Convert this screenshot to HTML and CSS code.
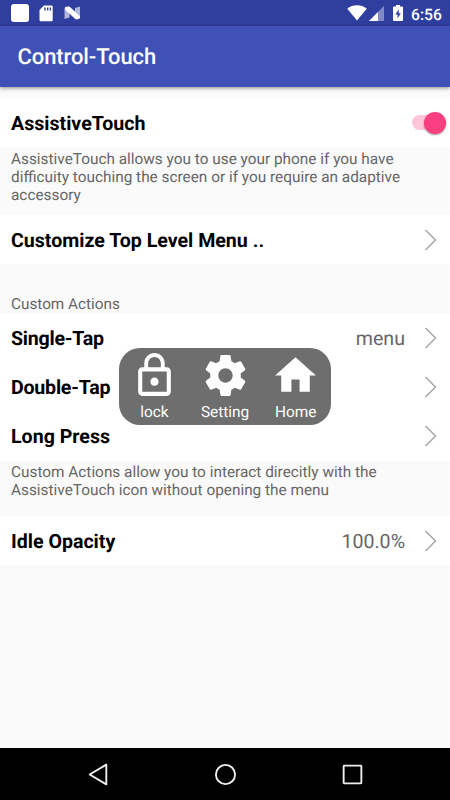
FILE: index.html
```
<!DOCTYPE html>
<html>
  <head>
    <meta charset="utf-8">
    <title>Control-Touch</title>
    <link rel="stylesheet" href="styles.css">
  </head>
  <body>
    <div class="statusbar">
      <div class="status-left">
        <span class="app-square"></span>
        <svg class="sd" viewBox="0 0 14 17"><path fill="#fff" fill-rule="evenodd" d="M5 .5h7.500a1.200 1.200 0 0 1 1.200 1.200v13.300a1.200 1.200 0 0 1-1.200 1.200H1.700A1.200 1.200 0 0 1 .500 15V5zM5.200 2.500v3h1.400v-3zM8 2.500v3h1.400v-3zM10.700 2.500v3h1.300v-3z"/></svg>
        <svg class="nougat" viewBox="0 0 17 14"><path fill="#b2b8dd" d="M.500 2v11l5-1.500V6zM11 2l5-1.500V11l-5-3.500z"/><path fill="#fff" d="M1 2.200Q.500 1 2 .800L4.600.500Q5.500.500 6 1L16 10.300v1.500q0 .700-.800.900l-2.700.700q-.800 0-1.500-.600L1 3.500z"/></svg>
      </div>
      <div class="status-right">
        <svg class="wifi" viewBox="0 0 20 16"><path fill="#fff" d="M10 15.500L.300 3.700C5.500-.800 14.500-.800 19.700 3.700z"/></svg>
        <svg class="signal" viewBox="0 0 15 15"><path fill="#8289c5" d="M15 0v15H0z"/><path fill="#fff" d="M9 6v9H0z"/></svg>
        <svg class="battery" viewBox="0 0 10 16"><path fill="#fff" fill-rule="evenodd" d="M3 0h4v1.600h2q1 0 1 1V15q0 1-1 1H1q-1 0-1-1V2.600q0-1 1-1h2zM5.700 4.200L2.400 9.600h2.200v4l3.200-5.400H5.700z"/></svg>
        <span class="clock">6:56</span>
      </div>
    </div>

    <div class="toolbar">Control-Touch</div>

    <div class="content">
      <div class="row">
        <span class="title">AssistiveTouch</span>
        <span class="switch"><span class="thumb"></span></span>
      </div>
      <p class="note note-top">AssistiveTouch allows you to use your phone if you have<br>difficuity touching the screen or if you require an adaptive<br>accessory</p>

      <div class="row">
        <span class="title">Customize Top Level Menu ..</span>
        <svg class="arrow" viewBox="0 0 13 22"><path d="M1.500 1l10 10-10 10"/></svg>
      </div>

      <div class="section">Custom Actions</div>
      <div class="row">
        <span class="title tight">Single-Tap</span>
        <span class="value">menu</span>
        <svg class="arrow" viewBox="0 0 13 22"><path d="M1.500 1l10 10-10 10"/></svg>
      </div>
      <div class="row">
        <span class="title tight">Double-Tap</span>
        <svg class="arrow" viewBox="0 0 13 22"><path d="M1.500 1l10 10-10 10"/></svg>
      </div>
      <div class="row">
        <span class="title">Long Press</span>
        <svg class="arrow" viewBox="0 0 13 22"><path d="M1.500 1l10 10-10 10"/></svg>
      </div>
      <p class="note note-actions">Custom Actions allow you to interact direcitly with the<br>AssistiveTouch icon without opening the menu</p>

      <div class="row">
        <span class="title">Idle Opacity</span>
        <span class="value">100.0%</span>
        <svg class="arrow" viewBox="0 0 13 22"><path d="M1.500 1l10 10-10 10"/></svg>
      </div>
    </div>

    <!-- floating touch menu -->
    <div class="popup">
      <div class="item">
        <svg viewBox="0 0 24 24"><path d="M12 17c1.100 0 2-.900 2-2s-.900-2-2-2-2 .900-2 2 .900 2 2 2zm6-9h-1V6c0-2.760-2.240-5-5-5S7 3.240 7 6v2H6c-1.100 0-2 .900-2 2v10c0 1.100.900 2 2 2h12c1.100 0 2-.900 2-2V10c0-1.100-.900-2-2-2zM8.900 6c0-1.710 1.390-3.100 3.100-3.100s3.100 1.390 3.100 3.100v2H8.900V6zM18 20H6V10h12v10z"/></svg>
        <span>lock</span>
      </div>
      <div class="item">
        <svg viewBox="0 0 24 24"><path d="M19.430 12.980c.040-.320.070-.640.070-.980s-.030-.660-.070-.980l2.110-1.650c.190-.150.240-.420.120-.640l-2-3.460c-.120-.220-.390-.300-.610-.220l-2.490 1c-.520-.400-1.080-.730-1.690-.980l-.380-2.650C14.460 2.180 14.250 2 14 2h-4c-.250 0-.460.180-.490.420l-.380 2.650c-.610.250-1.170.590-1.690.980l-2.490-1c-.230-.090-.490 0-.610.220l-2 3.460c-.130.220-.070.490.120.640l2.110 1.650c-.040.320-.070.650-.070.980s.030.660.070.980l-2.110 1.650c-.190.150-.240.420-.120.640l2 3.460c.120.220.390.300.610.220l2.490-1c.520.400 1.080.730 1.690.980l.380 2.650c.030.240.240.420.490.420h4c.250 0 .460-.180.490-.420l.380-2.650c.610-.250 1.170-.590 1.690-.980l2.490 1c.230.090.490 0 .610-.220l2-3.460c.120-.220.070-.490-.120-.640l-2.110-1.650zM12 15.500c-1.930 0-3.500-1.570-3.500-3.500s1.570-3.500 3.500-3.500 3.500 1.570 3.500 3.500-1.570 3.500-3.500 3.500z"/></svg>
        <span>Setting</span>
      </div>
      <div class="item">
        <svg viewBox="0 0 24 24"><path d="M10 20v-6h4v6h5v-8h3L12 3 2 12h3v8z"/></svg>
        <span>Home</span>
      </div>
    </div>

    <div class="navbar">
      <svg viewBox="0 0 24 24"><path d="M19.500 2.500v19L3.500 12z"/></svg>
      <svg viewBox="0 0 24 24"><circle cx="12" cy="12" r="9.200"/></svg>
      <svg viewBox="0 0 24 24"><rect x="3.500" y="3.500" width="17" height="17" rx=".500"/></svg>
    </div>
  </body>
</html>
```

FILE: styles.css
```
* { box-sizing: border-box; }

body {
  margin: 0;
  width: 450px;
  height: 800px;
  display: flex;
  flex-direction: column;
  position: relative;
  overflow: hidden;
  background: #fafafa;
  font-family: Roboto, "Liberation Sans", sans-serif;
  text-rendering: geometricPrecision;
}

.statusbar {
  height: 26px;
  flex: none;
  display: flex;
  justify-content: space-between;
  background: #303f9f;
  padding: 0 9px 0 11px;
  color: #fff;
}
.status-left, .status-right { display: flex; align-items: center; }
.app-square { width: 18px; height: 18px; border-radius: 3px; background: #fff; }
.sd { width: 14px; height: 17px; margin-left: 10px; }
.nougat { width: 17px; height: 14px; margin-left: 11px; }
.wifi { width: 20px; height: 16px; }
.signal { width: 15px; height: 15px; margin-left: 2px; }
.battery { width: 10px; height: 16px; margin-left: 9px; }
.clock { width: 30px; margin: 2px 0 0 8px; font-size: 15.700px; font-weight: 500; white-space: nowrap; }

.toolbar {
  height: 61px;
  flex: none;
  padding-left: 17.500px;
  line-height: 64px;
  background: #3f51b5;
  color: #fff;
  font-size: 22px;
  font-weight: 500;
  letter-spacing: -.1px;
  box-shadow: 0 1px 4px rgba(0, 0, 0, .45);
}

.content { flex: 1; padding-top: 11px; }

.row {
  height: 49.200px;
  display: flex;
  align-items: center;
  padding: 2px 4px 0 11px;
  background: #fff;
}
.title { flex: 1; font-size: 19.600px; font-weight: 700; color: #000; }
.tight { letter-spacing: -.22px; }
.value { font-size: 19.600px; color: #666; margin-right: 19px; }
.arrow { width: 13px; height: 22px; margin: -2px 9px 0 0; fill: none; stroke: #a8a8a8; stroke-width: 1.500; }

.switch {
  width: 34px;
  height: 15px;
  margin-top: -2px;
  border-radius: 8px;
  background: #ffc6d9;
  display: flex;
  align-items: center;
  justify-content: flex-end;
}
.thumb {
  width: 22px;
  height: 22px;
  flex: none;
  border-radius: 50%;
  background: #fc3f80;
  box-shadow: 0 1px 2px rgba(0, 0, 0, .4);
}

.note {
  margin: 0;
  padding: 3px 0 0 11px;
  font-size: 15.360px;
  line-height: 18px;
  color: #666;
}
.note-top { height: 67.800px; }
.note-actions { height: 55.400px; padding-top: 2.500px; }
.section { height: 48.800px; padding: 30.500px 0 0 11px; font-size: 15.300px; line-height: 18px; color: #666; }

.popup {
  position: absolute;
  left: 119px;
  top: 348px;
  width: 212px;
  height: 77px;
  padding-top: 3px;
  border-radius: 21px;
  background: #6e6e6e;
  display: flex;
}
.item { flex: 1; display: flex; flex-direction: column; align-items: center; color: #fff; font-size: 15.400px; line-height: 18px; }
.item svg { width: 49px; height: 49px; fill: #fff; }
.item span { margin-top: 3px; }

.navbar {
  height: 52px;
  flex: none;
  display: flex;
  justify-content: center;
  align-items: center;
  gap: 102px;
  background: #000;
}
.navbar svg { width: 25px; height: 25px; fill: none; stroke: #eee; stroke-width: 1.800; stroke-linejoin: round; }
```
